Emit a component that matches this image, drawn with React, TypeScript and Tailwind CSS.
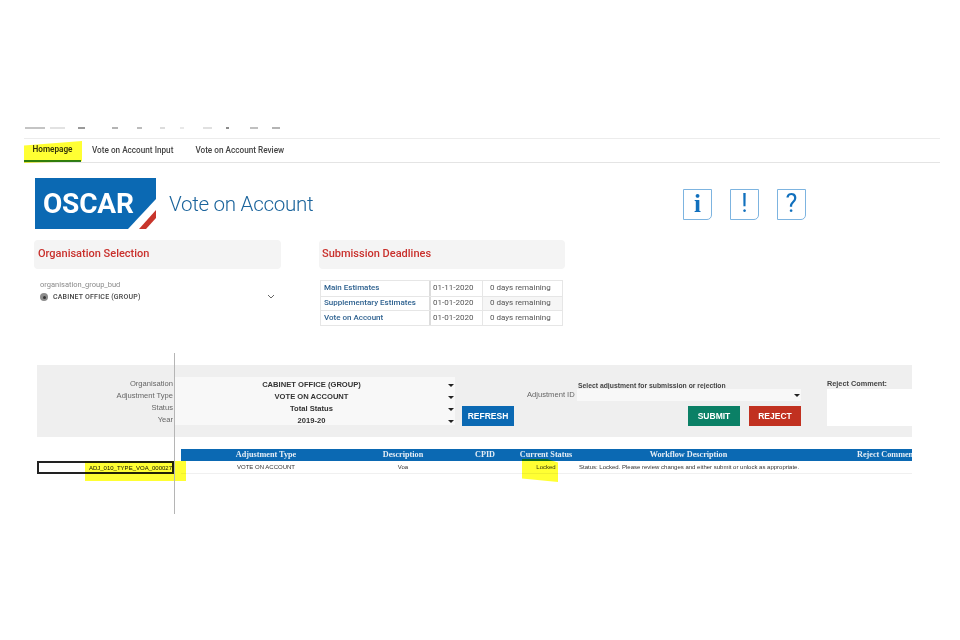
const deadlines = [
  { name: "Main Estimates", date: "01-11-2020" },
  { name: "Supplementary Estimates", date: "01-01-2020" },
  { name: "Vote on Account", date: "01-01-2020" },
];

const filters = ["Organisation", "Adjustment Type", "Status", "Year"];
const values = ["CABINET OFFICE (GROUP)", "VOTE ON ACCOUNT", "Total Status", "2019-20"];
const sans = "font-['Roboto',sans-serif]";

// the cropped ribbon icons at the very top: [gap before, width, colour]
const ribbon: [number, number, string][] = [
  [25, 20, "#c4c4c4"],
  [5, 15, "#e2e2e2"],
  [13, 7, "#9a9a9a"],
  [27, 6, "#b4b4b4"],
  [19, 5, "#bcbcbc"],
  [18, 5, "#dcdcdc"],
  [15, 4, "#e8e8e8"],
  [19, 9, "#e0e0e0"],
  [14, 3, "#8c8c8c"],
  [21, 8, "#c0c0c0"],
  [14, 8, "#b4b4b4"],
];

function Caret() {
  return <div className="h-0 w-0 border-x-[3px] border-t-[3px] border-x-transparent border-t-[#222]" />;
}

function NoteIcon({ char, serif }: { char: string; serif?: boolean }) {
  return (
    <div
      className={
        "flex h-[31px] w-[29px] items-center justify-center rounded-br-[5px] border border-[#7db4e0] text-[#1170bd] " +
        (serif ? "font-['Liberation_Serif',serif] text-[25px] font-bold" : "font-['Roboto',sans-serif] text-[25px]")
      }
    >
      {char}
    </div>
  );
}

export default function App() {
  return (
    <div className={"relative h-[640px] w-[960px] overflow-hidden bg-white pt-[126px] " + sans}>
      <div className="flex h-[12px] items-start">
        {ribbon.map(([gap, width, colour], i) => (
          <div key={i} style={{ marginLeft: gap, width, backgroundColor: colour }} className="mt-[1px] h-[2px]" />
        ))}
      </div>
      <div className="ml-[24px] w-[916px] border-t border-[#ececec]">
        <div className="flex h-[24px] items-end border-b border-[#e4e4e4] text-[8.2px] font-medium text-[#444]">
          <div className="flex h-[22px] w-[57px] items-center justify-center border-b-2 border-[#2f7d32] pb-[1px] font-semibold text-[#333]">
            Homepage
          </div>
          <span className="mb-[6px] ml-[11px]">Vote on Account Input</span>
          <span className="mb-[6px] ml-[22px]">Vote on Account Review</span>
        </div>
      </div>

      <div className="ml-[35px] mt-[15px] flex h-[51px] w-[771px] items-center">
        <div className="relative flex h-[51px] w-[121px] items-center overflow-hidden bg-[#0b69b3] pl-[8px] text-[28px] font-bold tracking-[-0.2px] text-white">
          OSCAR
          <svg className="absolute bottom-0 right-0" width="28" height="30" viewBox="0 0 28 30">
            <path d="M28 0 L0 30 L28 30 Z" fill="#fff" />
            <path d="M28 11 L11 30 L18 30 L28 19 Z" fill="#c8352b" />
          </svg>
        </div>
        <div className="ml-[13px] mt-[1px] text-[20.6px] font-light tracking-[-0.3px] text-[#1b649c]">Vote on Account</div>
        <div className="ml-auto flex gap-[18px] pt-[1px]">
          <NoteIcon char="i" serif />
          <NoteIcon char="!" />
          <NoteIcon char="?" />
        </div>
      </div>

      <div className="ml-[34px] mt-[11px] flex h-[110px]">
        <div className="w-[247px]">
          <div className="flex h-[29px] items-center rounded-sm bg-[#f4f4f4] pl-[4px] text-[11px] font-medium text-[#c9302c]">
            Organisation Selection
          </div>
          <div className="ml-[6px] mt-[10px] text-[7.5px] text-[#8a8a8a]">organisation_group_bud</div>
          <div className="ml-[6px] mt-[1px] flex h-[12px] items-center pr-[6px] text-[7px] font-medium text-[#444]">
            <div className="flex h-[8px] w-[8px] items-center justify-center rounded-full bg-[#8c8c8c]">
              <div className="h-[3px] w-[3px] rounded-full bg-[#333]" />
            </div>
            <span className="ml-[5px] tracking-[0.2px]">CABINET OFFICE (GROUP)</span>
            <svg className="ml-auto" width="8" height="6" viewBox="0 0 8 6" fill="none" stroke="#666" strokeWidth="1">
              <path d="M1 1 L4 4 L7 1" />
            </svg>
          </div>
        </div>
        <div className="ml-[38px] w-[246px]">
          <div className="flex h-[29px] items-center rounded-sm bg-[#f4f4f4] pl-[3px] text-[11px] font-medium text-[#c9302c]">
            Submission Deadlines
          </div>
          <div className="ml-[1px] mt-[11px] w-[243px] border border-[#e6e6e6] text-[8px] text-[#555]">
            {deadlines.map((d, i) => (
              <div key={d.name} className={"flex h-[14.5px] items-center " + (i ? "border-t border-[#e6e6e6]" : "")}>
                <div className="flex h-full w-[110px] items-center border-r-2 border-[#dcdcdc] pl-[3px] font-medium text-[#2f6290]">
                  {d.name}
                </div>
                <div className="flex h-full w-[52px] items-center border-r border-[#e6e6e6] pl-[2px]">{d.date}</div>
                <div className={"flex h-full flex-1 items-center pl-[7px] " + (i === 1 ? "bg-[#f6f6f6]" : "")}>
                  0 days remaining
                </div>
              </div>
            ))}
          </div>
        </div>
      </div>

      <div className="ml-[37px] mt-[15px] flex h-[72px] w-[875px] bg-[#efefef] pt-[12px] font-['Liberation_Sans',sans-serif]">
        <div className="w-[136px] pt-[1px] text-right text-[7.6px] leading-[12px] text-[#666]">
          {filters.map((f) => (
            <div key={f}>{f}</div>
          ))}
        </div>
        <div className="ml-[2px] h-[48px] w-[280px] bg-[#f8f8f8] text-[7.6px] font-semibold text-[#333]">
          {values.map((v) => (
            <div key={v} className="flex h-[12px] items-center pr-[1px] pt-[4px]">
              <span className="flex-1 text-center">{v}</span>
              <Caret />
            </div>
          ))}
        </div>
        <button className="ml-[7px] mt-[29px] h-[20px] w-[52px] bg-[#0b69b3] text-[8.5px] font-bold text-white">
          REFRESH
        </button>
        <div className="ml-[13px] w-[274px]">
          <div className="h-[12px] pl-[51px] pt-[3px] text-[6.8px] font-bold leading-[11px] text-[#444]">
            Select adjustment for submission or rejection
          </div>
          <div className="flex h-[12px] items-center justify-between text-[7.6px] text-[#666]">
            Adjustment ID
            <div className="flex h-full w-[224px] items-center justify-end bg-[#f8f8f8] pr-[1px]">
              <Caret />
            </div>
          </div>
          <div className="mt-[5px] flex justify-end gap-[9px] text-[8.5px] font-bold text-white">
            <button className="h-[20px] w-[52px] bg-[#0b8066]">SUBMIT</button>
            <button className="h-[20px] w-[52px] bg-[#c13120]">REJECT</button>
          </div>
        </div>
        <div className="ml-[26px] flex-1">
          <div className="h-[12px] text-[7.3px] font-bold leading-[14px] text-[#444]">Reject Comment:</div>
          <div className="h-[37px] bg-white" />
        </div>
      </div>

      <div className="ml-[37px] mt-[12px] flex w-[875px] font-['Liberation_Serif',serif]">
        <div className="mt-[12px] flex h-[13px] w-[137px] items-end justify-end border-2 border-[#222] font-['Liberation_Sans',sans-serif] text-[6px] leading-[7px] text-[#111]">
          ADJ_010_TYPE_VOA_000027
        </div>
        <div className="ml-[7px] w-[731px] overflow-hidden">
          <div className="flex h-[12px] items-center whitespace-nowrap bg-[#0b69b3] text-[8.2px] font-bold text-[#e6eef6]">
            <div className="w-[170px] shrink-0 text-center">Adjustment Type</div>
            <div className="w-[104px] shrink-0 text-center">Description</div>
            <div className="w-[60px] shrink-0 text-center">CPID</div>
            <div className="w-[62px] shrink-0 text-center">Current Status</div>
            <div className="w-[223px] shrink-0 text-center">Workflow Description</div>
            <div className="ml-[57px] shrink-0">Reject Comment</div>
          </div>
          <div className="flex h-[13px] items-center whitespace-nowrap border-b border-[#f0f0f0] pt-[1px] font-['Liberation_Sans',sans-serif] text-[6px] text-[#333]">
            <div className="w-[170px] shrink-0 text-center">VOTE ON ACCOUNT</div>
            <div className="w-[104px] shrink-0 text-center">Voa</div>
            <div className="w-[60px] shrink-0" />
            <div className="w-[62px] shrink-0 text-center">Locked</div>
            <div className="pl-[2px]">Status: Locked. Please review changes and either submit or unlock as appropriate.</div>
          </div>
        </div>
      </div>

      {/* marker highlights and the pane divider lie over the sheet */}
      <div className="absolute left-[24px] top-[141px] h-[22px] w-[58px] bg-[#ffff33] mix-blend-multiply [clip-path:polygon(0_20%,100%_0,100%_92%,0_100%)]" />
      <div className="absolute left-[85px] top-[461px] h-[20px] w-[101px] bg-[#ffff33] mix-blend-multiply" />
      <div className="absolute left-[522px] top-[459px] h-[23px] w-[36px] bg-[#ffff33] mix-blend-multiply [clip-path:polygon(0_0,70%_0,100%_15%,100%_100%,0_85%)]" />
      <div className="absolute left-[174px] top-[353px] h-[161px] w-[1px] bg-[#b5b5b5]" />
    </div>
  );
}
